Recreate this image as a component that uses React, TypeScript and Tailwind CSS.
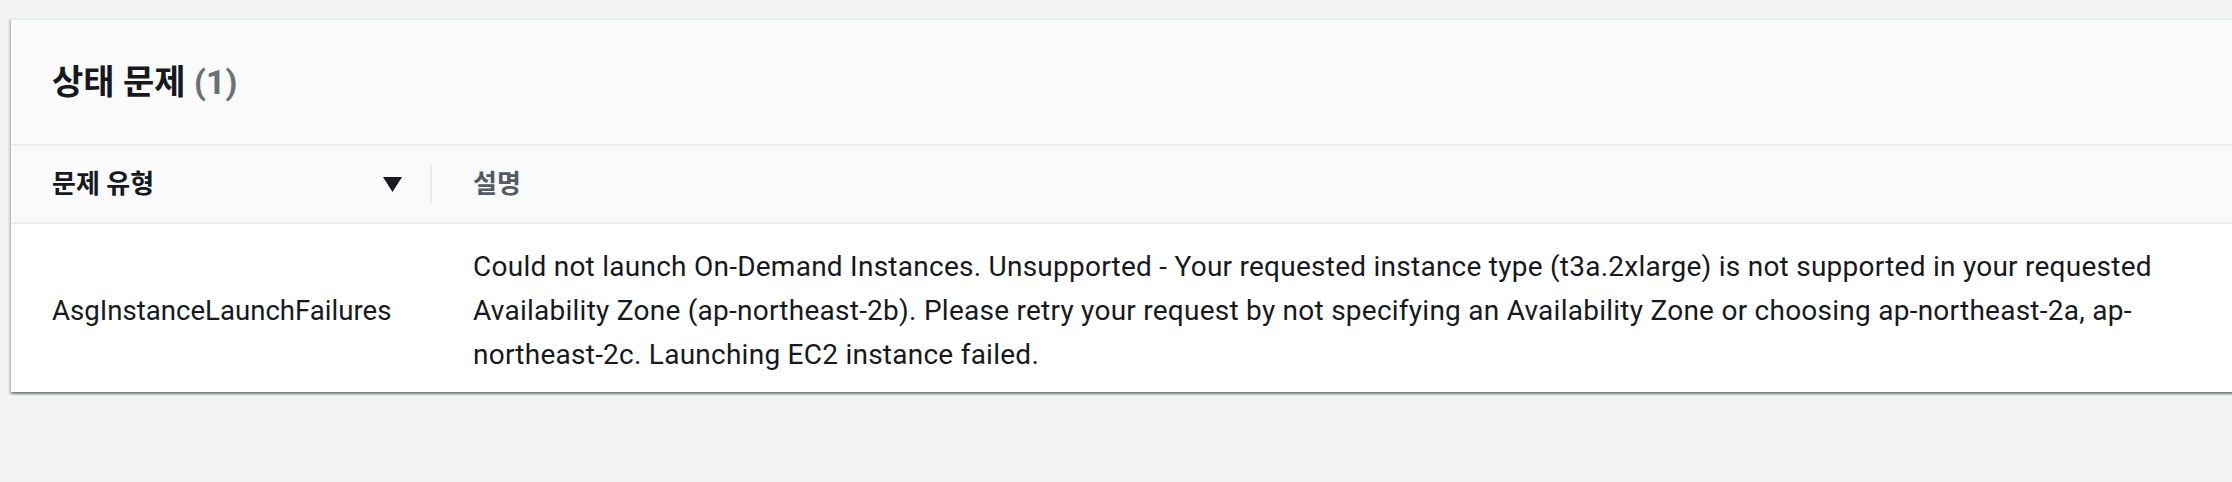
export default function App() {
  return (
    <div className="w-[2232px] h-[482px] overflow-hidden bg-[#f2f3f3] pt-[18px] font-[Roboto,'Noto_Sans_CJK_KR',sans-serif] text-[#16191f]">
      <div className="ml-[11px] w-[2240px] border-t-2 border-[#eaeded] bg-white shadow-[0_2px_2px_0_rgba(0,28,36,0.35),2px_2px_2px_0_rgba(0,28,36,0.15),-2px_2px_2px_0_rgba(0,28,36,0.15)]">
        <div className="h-[126px] flex items-center pl-[41px] bg-[#fafafa] border-b-2 border-[#eaeded]">
          <h2 className="text-[34px] font-bold leading-none">
            상태 문제 <span className="text-[#687078]">(1)</span>
          </h2>
        </div>

        <div className="h-[78px] flex items-center bg-[#fafafa] border-b-2 border-[#eaeded]">
          <div className="w-[419px] pl-[41px] pr-[28px] flex items-center justify-between">
            <span className="text-[26px] font-bold">문제 유형</span>
            <svg width="19" height="15" viewBox="0 0 19 15" className="block">
              <path d="M0 0H19L9.5 15Z" fill="#16191f" />
            </svg>
          </div>
          <div className="w-[2px] h-[39px] bg-[#eaeded]" />
          <div className="pl-[41px] text-[26px] font-bold text-[#545b64]">설명</div>
        </div>

        <div className="flex pt-[21px] pb-[15px] leading-[44px]">
          <div className="w-[421px] shrink-0 pl-[41px] flex items-center text-[27.6px]">AsgInstanceLaunchFailures</div>
          <div className="w-[1780px] pl-[41px] text-[28px] tracking-[0.25px]">
            Could not launch On-Demand Instances. Unsupported - Your requested instance type (t3a.2xlarge) is not supported in your requested Availability Zone (ap-northeast-2b). Please retry your request by not specifying an Availability Zone or choosing ap-northeast-2a, ap-northeast-2c. Launching EC2 instance failed.
          </div>
        </div>
      </div>
    </div>
  );
}
